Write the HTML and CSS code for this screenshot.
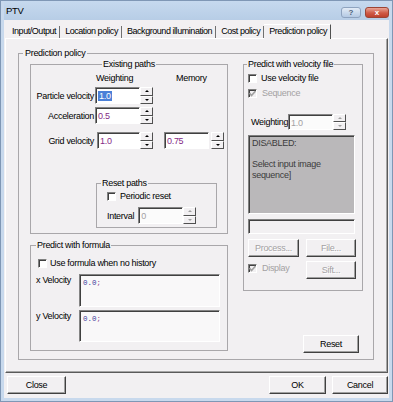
FILE: index.html
```html
<!DOCTYPE html>
<html lang="en">
<head>
    <meta charset="UTF-8">
    <title>PTV</title>
    <link rel="stylesheet" href="styles.css">
</head>
<body>

<div class="window">
    <div class="titlebar">
        <span class="title">PTV</span>
        <div class="caption-buttons">
            <span class="cap-btn help">?</span>
            <span class="cap-btn close">x</span>
        </div>
    </div>

    <div class="client">
        <div class="tabs">
            <span class="tab">Input/Output</span>
            <span class="tab">Location policy</span>
            <span class="tab">Background illumination</span>
            <span class="tab">Cost policy</span>
            <span class="tab active">Prediction policy</span>
        </div>

        <div class="panel">
            <fieldset class="group main-group">
                <legend>Prediction policy</legend>
                <div class="columns">

                    <div class="left-col">
                        <fieldset class="group existing">
                            <legend>Existing paths</legend>
                            <div class="param-head">
                                <span class="head-weight">Weighting</span>
                                <span>Memory</span>
                            </div>
                            <div class="param-row first">
                                <span class="param-label">Particle velocity</span>
                                <span class="edit"><span class="selected">1.0</span></span>
                                <span class="spin"><span class="up"></span><span class="down"></span></span>
                            </div>
                            <div class="param-row">
                                <span class="param-label">Acceleration</span>
                                <span class="edit">0.5</span>
                                <span class="spin"><span class="up"></span><span class="down"></span></span>
                            </div>
                            <div class="param-row grid-row">
                                <span class="param-label">Grid velocity</span>
                                <span class="edit grid-edit">1.0</span>
                                <span class="spin"><span class="up"></span><span class="down"></span></span>
                                <span class="edit memory-edit">0.75</span>
                                <span class="spin memory-spin"><span class="up"></span><span class="down"></span></span>
                            </div>

                            <fieldset class="group reset-box">
                                <legend>Reset paths</legend>
                                <div class="check-row periodic">
                                    <span class="check"></span>
                                    <span class="check-label">Periodic reset</span>
                                </div>
                                <div class="interval-row">
                                    <span>Interval</span>
                                    <span class="edit disabled interval-edit">0</span>
                                    <span class="spin disabled"><span class="up"></span><span class="down"></span></span>
                                </div>
                            </fieldset>
                        </fieldset>

                        <fieldset class="group formula">
                            <legend>Predict with formula</legend>
                            <div class="check-row use-formula">
                                <span class="check"></span>
                                <span class="check-label">Use formula when no history</span>
                            </div>
                            <div class="formula-row x-row">
                                <span class="formula-label">x Velocity</span>
                                <div class="code-box"><span class="num">0.0</span><span class="semi">;</span></div>
                            </div>
                            <div class="formula-row y-row">
                                <span class="formula-label">y Velocity</span>
                                <div class="code-box short"><span class="num">0.0</span><span class="semi">;</span></div>
                            </div>
                        </fieldset>
                    </div>

                    <div class="right-col">
                        <fieldset class="group velocity-file">
                            <legend>Predict with velocity file</legend>
                            <div class="check-row use-file">
                                <span class="check"></span>
                                <span class="check-label">Use velocity file</span>
                            </div>
                            <div class="check-row sequence">
                                <span class="check checked disabled">
                                    <svg width="7" height="7" viewBox="0 0 7 7"><polyline points="0.5,3 2.5,5.5 6.5,1" fill="none" stroke="#a0a0a0" stroke-width="1.6"/></svg>
                                </span>
                                <span class="check-label disabled-text">Sequence</span>
                            </div>
                            <div class="weight-row">
                                <span class="weight-label">Weighting</span>
                                <span class="edit disabled">1.0</span>
                                <span class="spin disabled"><span class="up"></span><span class="down"></span></span>
                            </div>
                            <div class="info-box">DISABLED:<br><br>Select input image<br>sequence]</div>
                            <div class="blank-field"></div>
                            <div class="btn-row process-row">
                                <span class="btn disabled process-btn">Process...</span>
                                <span class="btn disabled file-btn">File...</span>
                            </div>
                            <div class="btn-row display-row">
                                <div class="check-row display">
                                    <span class="check checked disabled">
                                        <svg width="7" height="7" viewBox="0 0 7 7"><polyline points="0.5,3 2.5,5.5 6.5,1" fill="none" stroke="#a0a0a0" stroke-width="1.6"/></svg>
                                    </span>
                                    <span class="check-label disabled-text">Display</span>
                                </div>
                                <span class="btn disabled sift-btn">Sift...</span>
                            </div>
                        </fieldset>
                        <span class="btn reset-btn">Reset</span>
                    </div>

                </div>
            </fieldset>
        </div>

        <div class="dialog-buttons">
            <span class="btn close-btn">Close</span>
            <span class="btn ok-btn">OK</span>
            <span class="btn cancel-btn">Cancel</span>
        </div>
    </div>
</div>

</body>
</html>
```

FILE: styles.css
```css
* {
    box-sizing: border-box;
}

html, body {
    margin: 0;
    padding: 0;
}

body {
    width: 393px;
    height: 402px;
    overflow: hidden;
    font-family: 'Liberation Sans', Arial, sans-serif;
    font-size: 9px;
    letter-spacing: -0.3px;
    line-height: 10px;
    color: #000000;
}

/* window frame */

.window {
    width: 393px;
    height: 402px;
    background: #c8d9ed;
    border: 1px solid #7f97b5;
    padding: 0 3px 3px 3px;
    display: flex;
    flex-direction: column;
}

.titlebar {
    height: 19px;
    display: flex;
    align-items: center;
    justify-content: space-between;
    padding-left: 2px;
    background: linear-gradient(#c6d9ee, #b7cde6);
}

.title {
    font-size: 9.5px;
}

.caption-buttons {
    display: flex;
    gap: 4px;
    margin-top: 4px;
}

.cap-btn {
    height: 11px;
    display: flex;
    align-items: center;
    justify-content: center;
    border-radius: 3px;
    font-weight: bold;
    font-size: 8px;
    letter-spacing: 0;
}

.cap-btn.help {
    width: 20px;
    border: 1px solid #8ea3bf;
    background: linear-gradient(#e2ebf6, #b4c9e3);
    color: #4a5c78;
}

.cap-btn.close {
    width: 24px;
    border: 1px solid #9c4434;
    background: linear-gradient(#e9a596, #cf5a46 55%, #bf412d);
    color: #ffffff;
}

.client {
    flex: 1;
    background: #f2f0f2;
    display: flex;
    flex-direction: column;
}

/* tabs */

.tabs {
    height: 18px;
    display: flex;
    align-items: flex-end;
    padding-left: 3px;
}

.tab {
    height: 12px;
    line-height: 11px;
    padding: 0 3px 0 5px;
    border-right: 1px solid #707070;
    letter-spacing: -0.45px;
}

.tab.active {
    height: 15px;
    line-height: 13px;
    margin-bottom: -1px;
    border-top: 1px solid #ffffff;
    border-right: 1px solid #505050;
    background: #f2f0f2;
    position: relative;
}

.panel {
    height: 335px;
    margin: 0 1px;
    border-top: 1px solid #ffffff;
    border-left: 1px solid #ffffff;
    border-right: 1px solid #5a5a5a;
    border-bottom: 1px solid #5a5a5a;
    box-shadow: inset -1px -1px 0 #a6a6a6;
    padding: 9px 0 0 12px;
}

/* group boxes */

.group {
    margin: 0;
    padding: 0;
    min-inline-size: 0;
    border: 1px solid #a9a7aa;
}

.group legend {
    padding: 0 1px;
    line-height: 10px;
    height: 10px;
}

.main-group {
    width: 356px;
    height: 312px;
}

.main-group > legend {
    margin-left: 4px;
    padding: 0 2px;
}

.columns {
    display: flex;
    gap: 15px;
    padding: 1px 0 0 11px;
}

.left-col {
    width: 198px;
}

.right-col {
    width: 120px;
    display: flex;
    flex-direction: column;
}

/* existing paths */

.existing {
    height: 175px;
}

.existing > legend {
    margin: 0 auto;
}

.param-head {
    display: flex;
    margin-top: 4px;
    padding-left: 65px;
    height: 10px;
}

.head-weight {
    width: 80px;
}

.param-row {
    display: flex;
    align-items: center;
    height: 17px;
    margin-top: 3px;
}

.param-row.first {
    margin-top: 4px;
}

.param-row.grid-row {
    margin-top: 8px;
}

.param-label {
    width: 63px;
    text-align: right;
    margin-right: 1px;
    white-space: nowrap;
}

.edit {
    width: 45px;
    height: 17px;
    background: #ffffff;
    border: 1px solid;
    border-color: #848484 #ffffff #ffffff #848484;
    box-shadow: inset 1px 1px 0 #404040;
    padding: 3px 0 0 2px;
    color: #842a86;
    display: block;
}

.edit .selected {
    background: #4b80d8;
    color: #ffffff;
    padding: 0 1px;
}

.edit.disabled {
    color: #a3a1a3;
    background: #fbfbfb;
}

.grid-edit {
    width: 43px;
    margin-left: 2px;
}

.memory-edit {
    margin-left: 11px;
}

.memory-spin {
    margin-left: 2px;
}

/* spinner */

.spin {
    width: 13px;
    height: 17px;
    display: flex;
    flex-direction: column;
}

.spin span {
    flex: 1;
    display: flex;
    align-items: center;
    justify-content: center;
    background: #f2f0f2;
    border: 1px solid;
    border-color: #ffffff #505050 #505050 #ffffff;
}

.spin .up::after,
.spin .down::after {
    content: "";
    width: 0;
    height: 0;
    border-left: 2px solid transparent;
    border-right: 2px solid transparent;
}

.spin .up::after {
    border-bottom: 2px solid #000000;
}

.spin .down::after {
    border-top: 2px solid #000000;
}

.spin.disabled .up::after {
    border-bottom-color: #a0a0a0;
}

.spin.disabled .down::after {
    border-top-color: #a0a0a0;
}

/* reset paths */

.reset-box {
    width: 121px;
    height: 50px;
    margin: 29px 0 0 65px;
}

.reset-box > legend {
    margin-left: 4px;
}

.check-row {
    display: flex;
    align-items: center;
    height: 10px;
}

.check {
    width: 9px;
    height: 9px;
    background: #ffffff;
    border: 1px solid;
    border-color: #808080 #ffffff #ffffff #808080;
    box-shadow: inset 1px 1px 0 #404040;
    display: flex;
    align-items: center;
    justify-content: center;
}

.check.disabled {
    background: #f2f0f2;
}

.check svg {
    display: block;
}

.check-label {
    margin-left: 4px;
    white-space: nowrap;
}

.disabled-text {
    color: #a3a1a3;
}

.periodic {
    margin-top: 3px;
    padding-left: 10px;
}

.interval-row {
    display: flex;
    align-items: center;
    margin-top: 6px;
    padding-left: 10px;
}

.interval-edit {
    margin-left: 4px;
}

/* formula */

.formula {
    height: 111px;
    margin-top: 6px;
}

.formula > legend {
    margin-left: 5px;
}

.use-formula {
    margin-top: 8px;
    padding-left: 7px;
}

.use-formula .check-label {
    margin-left: 3px;
}

.formula-row {
    display: flex;
    align-items: flex-start;
}

.x-row {
    margin-top: 6px;
}

.y-row {
    margin-top: 3px;
}

.formula-label {
    width: 48px;
    padding: 1px 0 0 5px;
    white-space: nowrap;
}

.code-box {
    width: 141px;
    height: 33px;
    background: #f9f8f9;
    border: 1px solid;
    border-color: #848484 #ffffff #ffffff #848484;
    box-shadow: inset 1px 1px 0 #404040;
    padding: 3px 0 0 3px;
    font-family: 'Liberation Mono', 'Courier New', monospace;
    font-size: 7.5px;
    letter-spacing: 0;
}

.code-box.short {
    height: 32px;
}

.code-box .num {
    color: #3c3c9c;
}

.code-box .semi {
    color: #8c3c8c;
}

/* velocity file */

.velocity-file {
    height: 232px;
    padding-left: 4px;
}

.velocity-file > legend {
    margin-left: -1px;
}

.use-file {
    margin-top: 4px;
}

.sequence {
    margin-top: 5px;
}

.sequence .check-label,
.display .check-label {
    margin-left: 5px;
}

.weight-row {
    display: flex;
    align-items: center;
    margin-top: 16px;
    height: 16px;
}

.weight-row .edit {
    height: 16px;
}

.weight-row .spin {
    height: 16px;
}

.weight-label {
    width: 40px;
    padding-left: 3px;
}

.info-box {
    width: 107px;
    height: 79px;
    margin-top: 5px;
    background: #bab8ba;
    border: 1px solid;
    border-color: #808080 #ffffff #ffffff #808080;
    box-shadow: inset 1px 1px 0 #404040;
    padding: 2px 0 0 3px;
    color: #3c3c3c;
    line-height: 10.5px;
}

.blank-field {
    width: 107px;
    height: 15px;
    margin-top: 5px;
    border: 1px solid;
    border-color: #808080 #ffffff #ffffff #808080;
    box-shadow: inset 1px 1px 0 #404040;
}

.btn-row {
    display: flex;
    align-items: flex-start;
    height: 18px;
}

.process-row {
    margin-top: 5px;
}

.display-row {
    margin-top: 4px;
}

.display {
    width: 58px;
    margin-top: 2px;
}

/* buttons */

.btn {
    height: 18px;
    display: flex;
    align-items: center;
    justify-content: center;
    background: #f2f0f2;
    border: 1px solid;
    border-color: #ffffff #404040 #404040 #ffffff;
    box-shadow: inset -1px -1px 0 #a0a0a0;
}

.btn.disabled {
    color: #a3a1a3;
    text-shadow: 1px 1px 0 #ffffff;
}

.process-btn {
    width: 51px;
}

.file-btn {
    width: 50px;
    margin-left: 7px;
}

.sift-btn {
    width: 50px;
}

.reset-btn {
    width: 56px;
    margin: 44px 0 0 60px;
}

.dialog-buttons {
    display: flex;
    margin-top: 3px;
    padding: 0 1px 0 3px;
}

.close-btn {
    width: 59px;
    margin-right: auto;
}

.ok-btn {
    width: 57px;
    margin-right: 6px;
}

.cancel-btn {
    width: 56px;
}
```
